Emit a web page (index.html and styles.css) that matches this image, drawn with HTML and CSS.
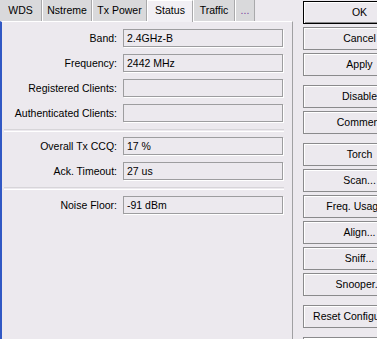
FILE: index.html
```
<!DOCTYPE html>
<html lang="en">
<head>
    <meta charset="UTF-8">
    <title>Interface Status</title>
    <link rel="stylesheet" href="styles.css">
</head>
<body>
    <div class="window">
        <div class="left">
            <div class="tabs">
                <div class="tab tab-wds">WDS</div>
                <div class="tab tab-nstreme">Nstreme</div>
                <div class="tab tab-txpower">Tx Power</div>
                <div class="tab tab-status active">Status</div>
                <div class="tab tab-traffic">Traffic</div>
                <div class="tab tab-more">...</div>
            </div>
            <div class="panel">
                <div class="row"><span class="label">Band:</span><span class="field">2.4GHz-B</span></div>
                <div class="row"><span class="label">Frequency:</span><span class="field">2442 MHz</span></div>
                <div class="row"><span class="label">Registered Clients:</span><span class="field"></span></div>
                <div class="row"><span class="label">Authenticated Clients:</span><span class="field"></span></div>
                <div class="sep"></div>
                <div class="row"><span class="label">Overall Tx CCQ:</span><span class="field">17 %</span></div>
                <div class="row"><span class="label">Ack. Timeout:</span><span class="field">27 us</span></div>
                <div class="sep sep-2"></div>
                <div class="row"><span class="label">Noise Floor:</span><span class="field">-91 dBm</span></div>
            </div>
        </div>

        <div class="buttons">
            <div class="btn default">OK</div>
            <div class="btn">Cancel</div>
            <div class="btn group-end">Apply</div>
            <div class="btn">Disable</div>
            <div class="btn group-end">Comment</div>
            <div class="btn">Torch</div>
            <div class="btn">Scan...</div>
            <div class="btn">Freq. Usage...</div>
            <div class="btn">Align...</div>
            <div class="btn">Sniff...</div>
            <div class="btn group-end">Snooper...</div>
            <div class="btn group-end">Reset Configuration</div>
            <div class="btn"></div>
        </div>
    </div>
</body>
</html>
```

FILE: styles.css
```
body {
    margin: 0;
    width: 377px;
    height: 339px;
    overflow: hidden;
    background-color: #ece9ee;
    font-family: "Liberation Sans", Arial, sans-serif;
    font-size: 10.5px;
    color: #000;
}

.window {
    display: flex;
    height: 339px;
}

.left {
    width: 293px;
    flex-shrink: 0;
    display: flex;
    flex-direction: column;
}

/* tab strip */
.tabs {
    display: flex;
    height: 22px;
    align-items: flex-start;
}

.tab {
    box-sizing: border-box;
    height: 21px;
    line-height: 20px;
    text-align: center;
    background-color: #d9d9db;
    border-left: 1px solid #fff;
    border-right: 1px solid #a9a9ab;
    color: #000;
}

.tab-wds { width: 42px; border-left: none; }
.tab-nstreme { width: 50px; }
.tab-txpower { width: 55px; }
.tab-status { width: 46px; }
.tab-traffic { width: 42px; }
.tab-more { width: 20px; color: #7a3e9d; }

.tab.active {
    height: 22px;
    line-height: 19px;
    background-color: #f2f0f4;
    border-top: 1px solid #fff;
    position: relative;
    z-index: 1;
}

/* status panel */
.panel {
    flex: 1;
    border-top: 1px solid #fff;
    border-right: 1px solid #a0a0a2;
    border-left: 2px solid #3158c4;
    margin-top: -1px;
    padding: 7px 8px 0 2px;
}

.row {
    display: flex;
    align-items: center;
    height: 18px;
    margin-bottom: 7px;
}

.label {
    width: 113px;
    text-align: right;
    margin-right: 6px;
    white-space: nowrap;
}

.field {
    box-sizing: border-box;
    width: 160px;
    height: 18px;
    line-height: 16px;
    padding-left: 3px;
    border: 1px solid #9d9d9f;
    box-shadow: 1px 1px 0 #fff;
    white-space: nowrap;
}

.sep {
    height: 1px;
    border-top: 1px solid #d7d5d9;
    border-bottom: 1px solid #fff;
    margin: 3px 0 5px 0;
}

.sep-2 {
    margin-top: 2px;
    margin-bottom: 6px;
}

/* right column */
.buttons {
    margin-left: 10px;
    padding-top: 1px;
    display: flex;
    flex-direction: column;
}

.btn {
    box-sizing: border-box;
    flex-shrink: 0;
    width: 113px;
    height: 23px;
    line-height: 21px;
    margin-bottom: 3px;
    text-align: center;
    white-space: nowrap;
    overflow: hidden;
    border: 1px solid #8a8a8c;
    box-shadow: inset 1px 1px 0 #fff;
}

.btn.default {
    border: 1px solid #000;
    box-shadow: inset 1px 1px 0 #fff, inset -1px -1px 0 #8a8a8c;
}

.btn.group-end {
    margin-bottom: 9px;
}
```
